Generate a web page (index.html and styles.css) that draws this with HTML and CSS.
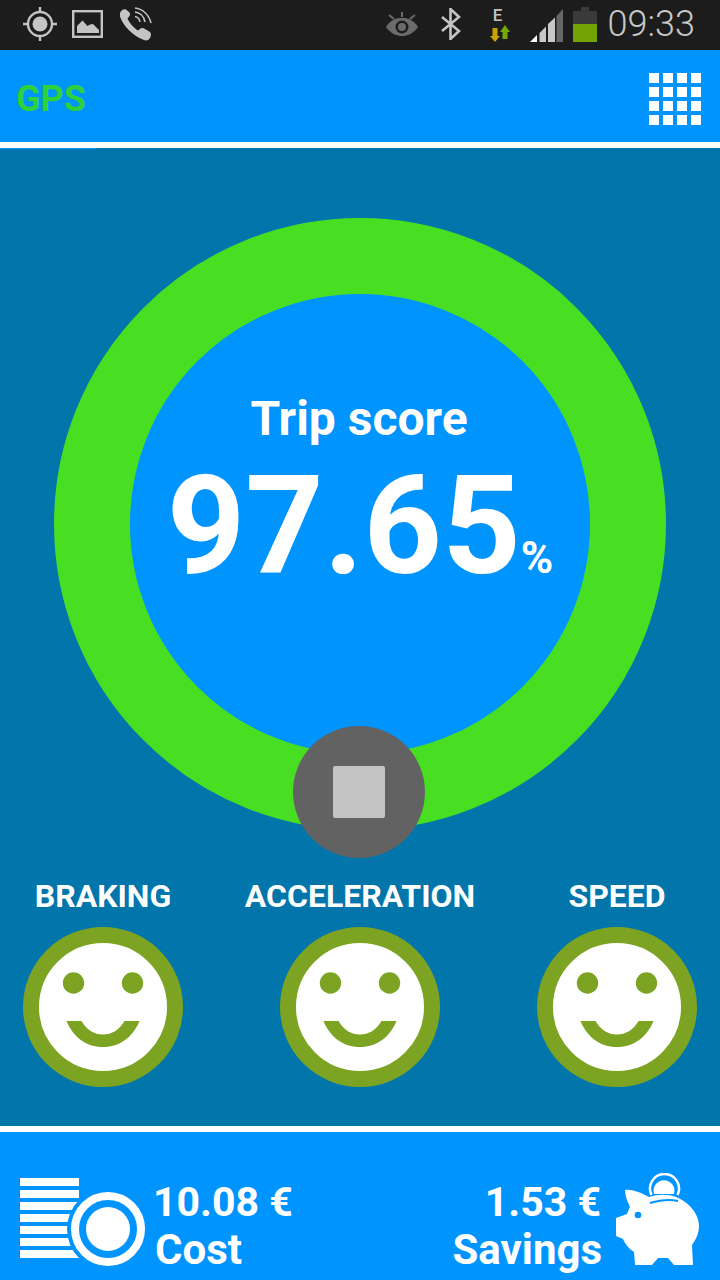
FILE: index.html
```html
<!DOCTYPE html>
<html lang="en">
<head>
<meta charset="utf-8">
<title>Trip score</title>
<link rel="stylesheet" href="styles.css">
</head>
<body>
<div class="app">
  <header class="status">
    <div class="status-left">
      <svg class="ic-gps" viewBox="0 0 34 34"><circle cx="17" cy="17" r="12" fill="none" stroke="#c4c4c4" stroke-width="2.4"/><circle cx="17" cy="17" r="7.5" fill="#c4c4c4"/><path d="M17 0v6M17 28v6M0 17h6M28 17h6" stroke="#c4c4c4" stroke-width="2.4"/></svg>
      <svg class="ic-img" viewBox="0 0 32 29"><rect x="1.2" y="1.2" width="28.6" height="25.6" fill="none" stroke="#c4c4c4" stroke-width="2.4"/><path d="M5 23V16L10.500 10.500 15.500 16 18 14.500 21 14 27 20V23Z" fill="#c4c4c4"/></svg>
      <svg class="ic-phone" viewBox="0 0 34 34"><path d="M1 6C2 3 5 1.500 7 2.500L10 5C11 6 11.500 7.500 10.500 9L8.500 11.500C10 15 14 20.500 19 23.500L21.500 21.500C23 20.500 24.500 21 26 22L31 25C32.500 26.500 32 29 31 31C29.500 33.500 27 34 25 33C14 29 4 19 1 9.500Z" fill="#c4c4c4"/><path d="M16 9.500C18.500 10 20.500 12 21 15M16 5C21 5.500 25 9.500 26 15M16 1C23 1.500 30 7.500 32 16" fill="none" stroke="#c4c4c4" stroke-width="1.500"/></svg>
    </div>
    <div class="status-right">
      <svg class="ic-eye" viewBox="0 0 32 24"><path d="M0 15C5 7 11 6 16 6S27 7 32 15C27 22 21 24 16 24S5 22 0 15Z" fill="#6b6b6b"/><circle cx="16" cy="15" r="6.500" fill="#1c1c1c"/><circle cx="16" cy="15" r="4" fill="#6b6b6b"/><path d="M16 0v5M3 3l5 4M29 3l-5 4" stroke="#6b6b6b" stroke-width="2"/></svg>
      <svg class="ic-bt" viewBox="0 0 20 32"><path d="M1 9L18 23 9.500 31V1L18 9 1 23" fill="none" stroke="#c4c4c4" stroke-width="2.600"/></svg>
      <div class="net">
        <span class="net-e">E</span>
        <svg class="ic-arrows" viewBox="0 0 22 18"><path d="M3.500 3h5v8H11L6 17 1 11h2.500Z" fill="#c9a200"/><path d="M11 7 16 0l5 7h-2.500v7h-5V7Z" fill="#76a800"/></svg>
      </div>
      <svg class="ic-signal" viewBox="0 0 33 33"><path d="M0 33L7 26V33Z" fill="#fff"/><path d="M9.500 24L16 17.500V33H9.500Z" fill="#c8c8c8"/><path d="M18 15L25 8.500V33H18Z" fill="#c8c8c8"/><path d="M26.500 7L33 0V33H26.500Z" fill="#666"/></svg>
      <svg class="ic-batt" viewBox="0 0 24 35"><path d="M8 0h8v4h8v13H0V4h8Z" fill="#3a3a3a"/><rect y="17" width="24" height="18" fill="#73a406"/></svg>
      <span class="clock">09:33</span>
    </div>
  </header>

  <nav class="toolbar">
    <span class="title">GPS</span>
    <div class="grid-menu">
      <i></i><i></i><i></i><i></i><i></i><i></i><i></i><i></i>
      <i></i><i></i><i></i><i></i><i></i><i></i><i></i><i></i>
    </div>
  </nav>
  <div class="divider"><span class="tab-mark"></span></div>

  <main class="main">
    <section class="ring">
      <div class="score">
        <div class="score-label">Trip score</div>
        <div class="score-value">97.65<span class="pct">%</span></div>
      </div>
      <button class="stop" aria-label="Stop"><span class="stop-square"></span></button>
    </section>
    <section class="metrics">
      <div class="metric">
        <div class="metric-label">BRAKING</div>
        <svg class="smiley" viewBox="0 0 160 160"><circle cx="80" cy="80" r="72" fill="#fff" stroke="#7da322" stroke-width="16"/><circle cx="50.500" cy="56" r="10.700" fill="#7da322"/><circle cx="109.500" cy="56" r="10.700" fill="#7da322"/><path d="M43.500 94H58.500C64 103 71 107.500 80 107.500S96 103 101.500 94H116.500C110 110 97 120 80 120S50 110 43.500 94Z" fill="#7da322"/></svg>
      </div>
      <div class="metric">
        <div class="metric-label">ACCELERATION</div>
        <svg class="smiley" viewBox="0 0 160 160"><circle cx="80" cy="80" r="72" fill="#fff" stroke="#7da322" stroke-width="16"/><circle cx="50.500" cy="56" r="10.700" fill="#7da322"/><circle cx="109.500" cy="56" r="10.700" fill="#7da322"/><path d="M43.500 94H58.500C64 103 71 107.500 80 107.500S96 103 101.500 94H116.500C110 110 97 120 80 120S50 110 43.500 94Z" fill="#7da322"/></svg>
      </div>
      <div class="metric">
        <div class="metric-label">SPEED</div>
        <svg class="smiley" viewBox="0 0 160 160"><circle cx="80" cy="80" r="72" fill="#fff" stroke="#7da322" stroke-width="16"/><circle cx="50.500" cy="56" r="10.700" fill="#7da322"/><circle cx="109.500" cy="56" r="10.700" fill="#7da322"/><path d="M43.500 94H58.500C64 103 71 107.500 80 107.500S96 103 101.500 94H116.500C110 110 97 120 80 120S50 110 43.500 94Z" fill="#7da322"/></svg>
      </div>
    </section>
  </main>

  <div class="divider plain"></div>

  <footer class="footer">
    <div class="stat">
      <svg class="ic-coins" viewBox="0 0 125 88"><g fill="#fff"><rect width="59" height="8"/><rect y="12" width="59" height="8"/><rect y="24" width="59" height="8"/><rect y="36" width="59" height="8"/><rect y="48" width="59" height="8"/><rect y="60" width="59" height="8"/><rect y="72" width="59" height="8"/></g><circle cx="88" cy="51" r="41" fill="#0094ff"/><circle cx="88" cy="51" r="33" fill="none" stroke="#fff" stroke-width="8"/><circle cx="88" cy="51" r="22" fill="#fff"/></svg>
      <div class="stat-text">
        <div class="stat-value">10.08 €</div>
        <div>Cost</div>
      </div>
    </div>
    <div class="stat">
      <div class="stat-text right">
        <div class="stat-value">1.53 €</div>
        <div>Savings</div>
      </div>
      <svg class="ic-pig" viewBox="0 0 84 94"><path d="M9 17C15 16 24 19 33 24C42 21 52 21 60 24C73 29 83 41 83 53C83 62 78 69 76 72L77 92H58L52 85H42L36 92H19L18 79C13 76 9 71 7 66L0 63V45L11 41C12 38 13 36 14 34C11 28 9 22 9 17Z" fill="#fff"/><circle cx="22" cy="42" r="3.300" fill="#0094ff"/><path d="M34 30C44 27 54 26 62 28" fill="none" stroke="#0094ff" stroke-width="2"/><path d="M35.500 22A14.500 14.500 0 1 1 61.500 22" fill="none" stroke="#fff" stroke-width="2.500"/><path d="M38 21A10.500 10.500 0 1 1 58 21Z" fill="#fff"/></svg>
    </div>
  </footer>
</div>
</body>
</html>
```

FILE: styles.css
```css
* { box-sizing: border-box; }
html, body { margin: 0; padding: 0; }
body { font-family: Roboto, "Liberation Sans", sans-serif; background: #0275ab; color: #fff; }
.app { width: 720px; height: 1280px; display: flex; flex-direction: column; overflow: hidden; }

.status { height: 50px; background: #1c1c1c; display: flex; justify-content: space-between; align-items: flex-start; flex: none; }
.status-left { display: flex; align-items: flex-start; padding-left: 23px; }
.ic-gps { width: 34px; height: 34px; margin-top: 7px; }
.ic-img { width: 32px; height: 29px; margin: 10px 0 0 15px; }
.ic-phone { width: 34px; height: 34px; margin: 7px 0 0 15px; }
.status-right { display: flex; align-items: flex-start; padding-right: 25px; }
.ic-eye { width: 32px; height: 24px; margin-top: 12px; }
.ic-bt { width: 20px; height: 32px; margin: 8px 0 0 23px; }
.net { width: 22px; margin: 7px 0 0 28px; display: flex; flex-direction: column; align-items: center; }
.net-e { font-size: 17px; line-height: 16px; font-weight: 500; color: #c4c4c4; margin-left: -4px; }
.ic-arrows { width: 22px; height: 18px; display: block; margin-top: 2px; }
.ic-signal { width: 33px; height: 33px; margin: 9px 0 0 19px; }
.ic-batt { width: 24px; height: 35px; margin: 7px 0 0 10px; }
.clock { font-size: 36px; line-height: 48px; font-weight: 300; color: #c8c8c8; margin-left: 11px; }

.toolbar { height: 92px; flex: none; background: #0094ff; display: flex; justify-content: space-between; align-items: center; padding: 0 19px 0 16px; }
.title { font-size: 36px; font-weight: 700; color: #2fd13a; margin-top: 6px; }
.grid-menu { display: grid; grid-template-columns: repeat(4, 10px); grid-auto-rows: 10px; gap: 4px; margin-top: 6px; }
.grid-menu i { background: #fff; display: block; }

.divider { height: 6px; background: #fff; flex: none; position: relative; z-index: 1; }
.tab-mark { position: absolute; left: 0; top: 100%; width: 96px; height: 1px; background: #0094ff; }

.main { flex: 1; background: #0275ab; padding-top: 70px; display: flex; flex-direction: column; align-items: center; }
.ring { width: 612px; height: 612px; border-radius: 50%; background: #0094ff; border: 76px solid #48df22; position: relative; display: flex; justify-content: center; flex: none; }
.score { padding-top: 97px; text-align: center; width: 100%; }
.score-label { font-size: 48px; line-height: 56px; font-weight: 700; margin-left: -2px; }
.score-value { font-size: 137px; line-height: 132px; font-weight: 700; margin-top: 13px; white-space: nowrap; }
.pct { font-size: 44px; line-height: 40px; }
.stop { position: absolute; left: 163px; top: 432px; width: 132px; height: 132px; border-radius: 50%; border: 0; padding: 0; background: #626262; display: flex; align-items: center; justify-content: center; }
.stop-square { width: 52px; height: 52px; background: #c4c4c4; border-radius: 2px; display: block; }

.metrics { width: 100%; display: flex; justify-content: space-between; padding: 44px 23px 0; }
.metric { width: 160px; display: flex; flex-direction: column; align-items: center; }
.metric-label { font-size: 32px; line-height: 44px; font-weight: 700; white-space: nowrap; margin-bottom: 9px; }
.smiley { width: 160px; height: 160px; display: block; }

.footer { height: 148px; flex: none; background: #0094ff; display: flex; justify-content: space-between; align-items: flex-start; padding: 0 20px; }
.stat { display: flex; align-items: flex-start; }
.stat-text { font-size: 42px; line-height: 48px; font-weight: 700; margin-top: 46px; white-space: nowrap; padding-right: 1px; }
.stat-value { font-size: 41px; margin-left: -2px; }
.stat-text.right { text-align: right; }
.right .stat-value { margin-right: 1px; }
.ic-coins { width: 125px; height: 88px; margin: 46px 10px 0 0; }
.ic-pig { width: 84px; height: 94px; margin: 41px 0 0 13px; }
```
